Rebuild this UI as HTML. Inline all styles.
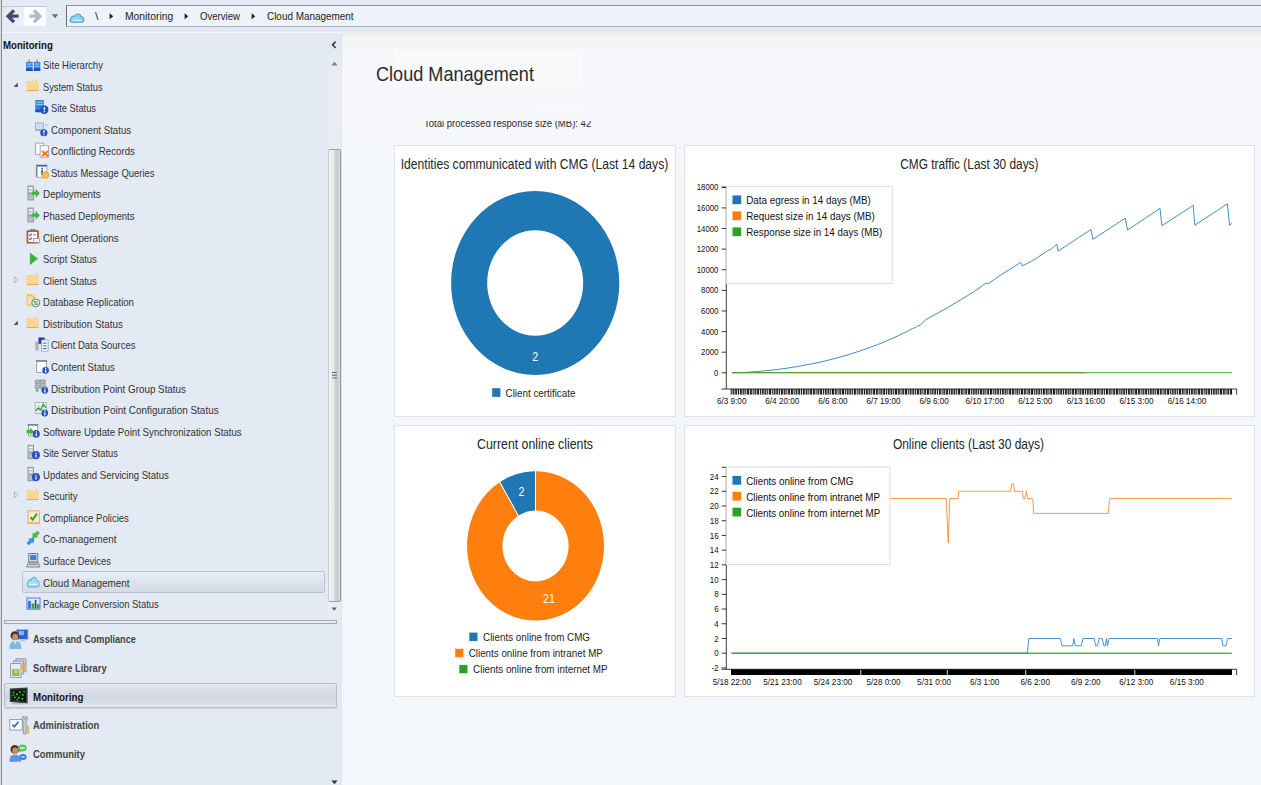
<!DOCTYPE html>
<html lang="en"><head><meta charset="utf-8"><title>Cloud Management</title>
<style>
html,body{margin:0;padding:0;}
body{width:1261px;height:785px;overflow:hidden;position:relative;background:#e3eaf3;font-family:"Liberation Sans",sans-serif;}
.t{position:absolute;white-space:nowrap;line-height:normal;transform-origin:0 0;display:block;}
.abs{position:absolute;}
svg{position:absolute;overflow:visible;}
svg text{font-family:"Liberation Sans",sans-serif;}
#topbar{position:absolute;left:0;top:0;width:1261px;height:32px;background:#e4eaf3;}
#addr{position:absolute;left:66px;top:5px;width:1200px;height:19.5px;background:#eef2f9;border:1px solid #8e96a6;border-top:1.6px solid #8d95a4;border-bottom-color:#a9b2c2;border-left-color:#6a7082;}
#navbtn{position:absolute;left:2px;top:5.6px;width:44px;height:20.4px;border-top:1px solid #c4c8d0;box-sizing:border-box;background:linear-gradient(90deg,#e6e9f0 0,#eceff5 49%,#fbfcfe 50%,#fbfcfe 100%);}
#sidebar{position:absolute;left:2px;top:33px;width:339px;height:752px;background:#e3eaf3;}
#main{position:absolute;left:342px;top:32px;width:919px;height:753px;background:linear-gradient(180deg,#ebebed 0,#f4f5f7 6px,#f6f7fa 30px,#f5f7fb 90px,#f3f6fb 140px,#f3f6fb 100%);}
.card{position:absolute;background:#fff;border:1px solid #dfe3e8;box-sizing:border-box;}
.sel{position:absolute;box-sizing:border-box;border:1px solid #b9c3d2;border-radius:2px;background:linear-gradient(180deg,#e9eef6 0,#dce3ed 50%,#d3dbe6 100%);}
</style></head><body>
<div id="topbar">
<div id="navbtn"></div>
<svg style="left:0;top:0" width="66" height="32" viewBox="0 0 66 32">
<path d="M18.6 16.2 H9.4 M14 10.3 L8.1 16.2 L14 22.1" fill="none" stroke="#4b4672" stroke-width="3.3" stroke-linecap="butt" stroke-linejoin="miter"/>
<path d="M29.4 16.2 H38.6 M34 10.3 L39.9 16.2 L34 22.1" fill="none" stroke="#b3b8c8" stroke-width="3.3" stroke-linecap="butt" stroke-linejoin="miter"/>
<path d="M51.8 14.2 H58.2 L55 18.2 Z" fill="#666a70"/>
</svg>
<div id="addr"></div>
<svg style="left:68px;top:8.8px" width="18" height="16" viewBox="0 0 18 16">
<path d="M4.2 13.2 C1.6 13.2 1 10.4 3 9.4 C3.2 7.2 5.4 6.6 6.6 7.4 C7.6 4.2 12.4 4.2 13 7.8 C16.2 7.6 16.8 12.6 14 13.2 Z" fill="#8fd0f0" stroke="#4aa3dc" stroke-width="1.1"/>
<path d="M4.5 11.3 H13.8" stroke="#e8f6fd" stroke-width="1"/>
</svg>
<span class="t " style="left:95.20px;top:9.94px;font-size:11px;transform:scaleX(1.1125);color:#333;">\</span>
<svg style="left:109.1px;top:13.4px" width="5" height="8" viewBox="0 0 5 8"><path d="M0.6 0.3 L4.2 3.3 L0.6 6.3 Z" fill="#1c1c1c"/></svg>
<svg style="left:184.4px;top:13.4px" width="5" height="8" viewBox="0 0 5 8"><path d="M0.6 0.3 L4.2 3.3 L0.6 6.3 Z" fill="#1c1c1c"/></svg>
<svg style="left:250.6px;top:13.4px" width="5" height="8" viewBox="0 0 5 8"><path d="M0.6 0.3 L4.2 3.3 L0.6 6.3 Z" fill="#1c1c1c"/></svg>
<span class="t " style="left:125.30px;top:10.21px;font-size:10.6px;transform:scaleX(0.9739);color:#1c1c1c;">Monitoring</span>
<span class="t " style="left:200.20px;top:10.21px;font-size:10.6px;transform:scaleX(0.9032);color:#1c1c1c;">Overview</span>
<span class="t " style="left:266.50px;top:10.21px;font-size:10.6px;transform:scaleX(0.9361);color:#1c1c1c;">Cloud Management</span>
</div>
<div class="abs" style="left:0;top:0;width:1px;height:785px;background:#d9dadc"></div>
<div class="abs" style="left:1px;top:0;width:1px;height:785px;background:#8b8e94"></div>
<div class="abs" style="left:2px;top:32px;width:340px;height:1px;background:#f4f7fb"></div>
<div id="sidebar"></div>
<span class="t " style="left:2.60px;top:39.15px;font-size:11px;transform:scaleX(0.8765);color:#111;font-weight:bold;">Monitoring</span>
<svg style="left:330px;top:40px" width="8" height="10" viewBox="0 0 8 10"><path d="M5.6 1.6 L2.6 4.8 L5.6 8" fill="none" stroke="#444" stroke-width="1.7"/></svg>
<div class="sel" style="left:22px;top:571px;width:302.5px;height:21.6px"></div>
<svg style="left:26.00px;top:57.00px" width="16" height="16" viewBox="0 0 16 16"><g transform="translate(-0.096,-0.009) scale(0.9793,1.0455)"><rect x="0.2" y="4.6" width="6.6" height="8.8" fill="#2f86d6"/><rect x="0.2" y="11.0" width="6.6" height="2.4" fill="#1c4fae"/><rect x="1.2" y="6.199999999999999" width="4.6" height="1" fill="#9fd0f5"/><rect x="1.2" y="8.399999999999999" width="4.6" height="1" fill="#9fd0f5"/><rect x="8.1" y="4.6" width="6.6" height="8.8" fill="#2f86d6"/><rect x="8.1" y="11.0" width="6.6" height="2.4" fill="#1c4fae"/><rect x="9.1" y="6.199999999999999" width="4.6" height="1" fill="#9fd0f5"/><rect x="9.1" y="8.399999999999999" width="4.6" height="1" fill="#9fd0f5"/><rect x="2.6" y="2.4" width="1.6" height="2.2" fill="#ff8a1e"/><rect x="10.6" y="2.4" width="1.6" height="2.2" fill="#ff8a1e"/></g></svg>
<span class="t " style="left:42.50px;top:59.12px;font-size:10.7px;transform:scaleX(0.8929);color:#333;">Site Hierarchy</span>
<svg style="left:26.00px;top:78.56px" width="16" height="16" viewBox="0 0 16 16"><g transform="translate(-0.016,-2.600) scale(1.0259,1.0000)"><path d="M0.6 4.6 H5.8 L7.0 3.4 H12.2 V14.6 H0.6 Z" fill="#f7d490"/><rect x="7.199999999999999" y="3.8" width="4.6" height="2.2" fill="#fbf3df"/><rect x="8.6" y="4.3" width="2.4" height="1" fill="#8fb6e6"/><rect x="0.6" y="6.199999999999999" width="11.6" height="8.4" fill="#f8d694"/><rect x="0.6" y="13.6" width="11.6" height="1.1" fill="#e3ae58"/></g></svg>
<span class="t " style="left:42.50px;top:80.68px;font-size:10.7px;transform:scaleX(0.8640);color:#333;">System Status</span>
<svg style="left:13px;top:82.36px" width="6" height="6" viewBox="0 0 6 6"><path d="M4.9 0.5 V5 H0.5 Z" fill="#505050"/></svg>
<svg style="left:34.60px;top:100.12px" width="16" height="16" viewBox="0 0 16 16"><g transform="translate(-0.593,-1.623) scale(0.9924,1.0146)"><rect x="0.9" y="1.6" width="8.6" height="12" fill="#2f86d6"/><rect x="0.9" y="11.2" width="8.6" height="2.4" fill="#1c4fae"/><rect x="1.9" y="3.2" width="6.6" height="1" fill="#9fd0f5"/><rect x="1.9" y="5.4" width="6.6" height="1" fill="#9fd0f5"/><circle cx="10" cy="11.2" r="4.1" fill="#2a50c4"/><rect x="9.4" y="8.6" width="1.3" height="3" fill="#fff"/><rect x="9.4" y="12.5" width="1.3" height="1.2" fill="#fff"/></g></svg>
<span class="t " style="left:50.80px;top:102.24px;font-size:10.7px;transform:scaleX(0.8697);color:#333;">Site Status</span>
<svg style="left:34.60px;top:121.68px" width="16" height="16" viewBox="0 0 16 16"><g transform="translate(-0.810,-0.676) scale(1.0083,0.9853)"><rect x="1.2" y="1.6" width="8" height="7.8" fill="#cbdcf0" stroke="#9aa6b6" stroke-width="0.8"/><rect x="2" y="7.8" width="6.4" height="1.2" fill="#8fb4e0"/><path d="M10 3.6 L13 2.4 V5.4 Z" fill="#c4c9d0"/><circle cx="9.6" cy="11.6" r="3.6" fill="#2a50c4"/><rect x="9.0" y="9.0" width="1.3" height="3" fill="#fff"/><rect x="9.0" y="12.9" width="1.3" height="1.2" fill="#fff"/></g></svg>
<span class="t " style="left:50.80px;top:123.80px;font-size:10.7px;transform:scaleX(0.9049);color:#333;">Component Status</span>
<svg style="left:34.60px;top:143.24px" width="16" height="16" viewBox="0 0 16 16"><g transform="translate(-0.683,-1.126) scale(1.0833,1.0217)"><rect x="1" y="1.2" width="7.4" height="11" fill="#fbfbfb" stroke="#9a9ea6" stroke-width="0.8"/><rect x="5.4" y="3.8" width="7.6" height="11.2" fill="#fbfbfb" stroke="#9a9ea6" stroke-width="0.8"/><path d="M7.2 9 L12.6 14 M12.6 9 L7.2 14" stroke="#ee7a1c" stroke-width="2"/></g></svg>
<span class="t " style="left:50.80px;top:145.36px;font-size:10.7px;transform:scaleX(0.9054);color:#333;">Conflicting Records</span>
<svg style="left:34.60px;top:164.80px" width="16" height="16" viewBox="0 0 16 16"><g transform="translate(-0.085,-0.971) scale(0.9846,0.9710)"><rect x="1.6" y="1" width="10.6" height="12.6" fill="#fdfdfd" stroke="#8f949c" stroke-width="0.8"/><rect x="1.6" y="1" width="10.6" height="1.6" fill="#3c62c8"/><rect x="1" y="3" width="1.6" height="10" fill="#7f858e"/><rect x="6.4" y="6.4" width="1.8" height="5" fill="#2b57c8"/><rect x="6.4" y="3.8" width="1.8" height="1.7" fill="#2b57c8"/><circle cx="10.6" cy="11.4" r="3.4" fill="#ffc15a" stroke="#f39a1e" stroke-width="0.9"/></g></svg>
<span class="t " style="left:50.80px;top:166.92px;font-size:10.7px;transform:scaleX(0.8851);color:#333;">Status Message Queries</span>
<svg style="left:26.00px;top:186.36px" width="16" height="16" viewBox="0 0 16 16"><g transform="translate(0.365,-1.029) scale(0.9597,1.0294)"><rect x="1.6" y="1" width="5.8" height="13.6" fill="#b9bec6" stroke="#7d838c" stroke-width="0.7"/><rect x="2.5" y="2.4" width="4.0" height="1.5" fill="#fff"/><rect x="2.5" y="5.2" width="4.0" height="1.5" fill="#eef0f3"/><rect x="2.5" y="8" width="4.0" height="1.2" fill="#8c929b"/><path d="M6 6.4 H9.6 V3.6 L14 8 L9.6 12.4 V9.6 H6 Z" fill="#3cb83c"/></g></svg>
<span class="t " style="left:42.50px;top:188.48px;font-size:10.7px;transform:scaleX(0.9240);color:#333;">Deployments</span>
<svg style="left:26.00px;top:207.92px" width="16" height="16" viewBox="0 0 16 16"><g transform="translate(0.365,-1.029) scale(0.9597,1.0294)"><rect x="1.6" y="1" width="5.8" height="13.6" fill="#b9bec6" stroke="#7d838c" stroke-width="0.7"/><rect x="2.5" y="2.4" width="4.0" height="1.5" fill="#fff"/><rect x="2.5" y="5.2" width="4.0" height="1.5" fill="#eef0f3"/><rect x="2.5" y="8" width="4.0" height="1.2" fill="#8c929b"/><path d="M6 6.4 H9.6 V3.6 L14 8 L9.6 12.4 V9.6 H6 Z" fill="#3cb83c"/></g></svg>
<span class="t " style="left:42.50px;top:210.04px;font-size:10.7px;transform:scaleX(0.9016);color:#333;">Phased Deployments</span>
<svg style="left:26.00px;top:229.48px" width="16" height="16" viewBox="0 0 16 16"><g transform="translate(-0.246,-0.953) scale(1.0574,1.0584)"><rect x="0.8" y="2" width="11.6" height="12.6" rx="1" fill="#a85a2c"/><rect x="2.4" y="3.8" width="8.4" height="9.4" fill="#fff"/><rect x="4" y="0.9" width="5.2" height="2.4" fill="#7c8088"/><path d="M3.2 6.2 L4.2 7.2 L5.8 5.2 M3.2 10 L4.2 11 L5.8 9" fill="none" stroke="#2c6cd0" stroke-width="1.1"/><rect x="6.8" y="6" width="3.2" height="0.9" fill="#777"/><rect x="7.4" y="10" width="5.6" height="3.6" fill="#eceef1" stroke="#8a8f97" stroke-width="0.7"/></g></svg>
<span class="t " style="left:42.50px;top:231.60px;font-size:10.7px;transform:scaleX(0.9169);color:#333;">Client Operations</span>
<svg style="left:26.00px;top:251.04px" width="16" height="16" viewBox="0 0 16 16"><g transform="translate(0.386,-0.062) scale(0.9762,0.9766)"><path d="M3.6 1.6 L12 8 L3.6 14.4 Z" fill="#3cb83c"/><path d="M6 6.4 L7.6 8 L6 9.6" fill="none" stroke="#2b8a2b" stroke-width="0.9"/></g></svg>
<span class="t " style="left:42.50px;top:253.16px;font-size:10.7px;transform:scaleX(0.8886);color:#333;">Script Status</span>
<svg style="left:26.00px;top:272.60px" width="16" height="16" viewBox="0 0 16 16"><g transform="translate(-0.016,-2.600) scale(1.0259,1.0000)"><path d="M0.6 4.6 H5.8 L7.0 3.4 H12.2 V14.6 H0.6 Z" fill="#f7d490"/><rect x="7.199999999999999" y="3.8" width="4.6" height="2.2" fill="#fbf3df"/><rect x="8.6" y="4.3" width="2.4" height="1" fill="#8fb6e6"/><rect x="0.6" y="6.199999999999999" width="11.6" height="8.4" fill="#f8d694"/><rect x="0.6" y="13.6" width="11.6" height="1.1" fill="#e3ae58"/></g></svg>
<span class="t " style="left:42.50px;top:274.72px;font-size:10.7px;transform:scaleX(0.8885);color:#333;">Client Status</span>
<svg style="left:13.6px;top:275.60px" width="5" height="8" viewBox="0 0 5 8"><path d="M0.7 0.9 L3.9 3.8 L0.7 6.7 Z" fill="#f4f6f9" stroke="#a3a7ad" stroke-width="0.9"/></svg>
<svg style="left:26.00px;top:294.16px" width="16" height="16" viewBox="0 0 16 16"><g transform="translate(-0.194,-1.939) scale(0.9924,0.9697)"><path d="M0.8 2 H6 L7 3.6 H9.2 V14 H0.8 Z" fill="#f5c264"/><rect x="2" y="4.6" width="5" height="8.2" fill="#fbe3ae"/><circle cx="10" cy="11.2" r="4" fill="#f2f6f2" stroke="#5d6a60" stroke-width="0.9"/><path d="M7.8 10.2 H11.6 M12.2 12.4 H8.4" stroke="#2fa52f" stroke-width="1.3"/></g></svg>
<span class="t " style="left:42.50px;top:296.28px;font-size:10.7px;transform:scaleX(0.8947);color:#333;">Database Replication</span>
<svg style="left:26.00px;top:315.72px" width="16" height="16" viewBox="0 0 16 16"><g transform="translate(-0.016,-2.600) scale(1.0259,1.0000)"><path d="M0.6 4.6 H5.8 L7.0 3.4 H12.2 V14.6 H0.6 Z" fill="#f7d490"/><rect x="7.199999999999999" y="3.8" width="4.6" height="2.2" fill="#fbf3df"/><rect x="8.6" y="4.3" width="2.4" height="1" fill="#8fb6e6"/><rect x="0.6" y="6.199999999999999" width="11.6" height="8.4" fill="#f8d694"/><rect x="0.6" y="13.6" width="11.6" height="1.1" fill="#e3ae58"/></g></svg>
<span class="t " style="left:42.50px;top:317.84px;font-size:10.7px;transform:scaleX(0.9202);color:#333;">Distribution Status</span>
<svg style="left:13px;top:319.52px" width="6" height="6" viewBox="0 0 6 6"><path d="M4.9 0.5 V5 H0.5 Z" fill="#505050"/></svg>
<svg style="left:34.60px;top:337.28px" width="16" height="16" viewBox="0 0 16 16"><g transform="translate(-0.414,-0.755) scale(1.0238,1.0462)"><rect x="0.6" y="5" width="3.4" height="8.6" fill="#aeb4bc"/><rect x="3.8" y="1.2" width="6" height="6" fill="#1f3f9e"/><rect x="6.6" y="3.6" width="6.6" height="10.6" fill="#fdfdfd" stroke="#8f949c" stroke-width="0.7"/><rect x="8" y="6" width="3.8" height="1.1" fill="#3a78d8"/><rect x="8" y="8.6" width="3.8" height="1.1" fill="#37a837"/><rect x="8" y="11.2" width="3.8" height="1.1" fill="#3a78d8"/></g></svg>
<span class="t " style="left:50.80px;top:339.40px;font-size:10.7px;transform:scaleX(0.8891);color:#333;">Client Data Sources</span>
<svg style="left:34.60px;top:358.84px" width="16" height="16" viewBox="0 0 16 16"><g transform="translate(0.318,-0.083) scale(0.9701,0.9855)"><rect x="1.4" y="2.2" width="10" height="11.6" fill="#fcfcfd" stroke="#9096a0" stroke-width="0.9"/><rect x="0.6" y="1.2" width="11.6" height="1.6" fill="#7f8690"/><circle cx="10.6" cy="11.6" r="3.4" fill="#2a50c4"/><rect x="10.0" y="10.9" width="1.3" height="3" fill="#fff"/><rect x="10.0" y="9.0" width="1.3" height="1.2" fill="#fff"/></g></svg>
<span class="t " style="left:50.80px;top:360.96px;font-size:10.7px;transform:scaleX(0.9042);color:#333;">Content Status</span>
<svg style="left:34.60px;top:380.40px" width="16" height="16" viewBox="0 0 16 16"><g transform="translate(-0.582,-1.410) scale(0.9773,1.0074)"><rect x="0.8" y="1.4" width="4.6" height="3.6" fill="#b4b9c1" stroke="#7d838c" stroke-width="0.6"/><rect x="6.4" y="1.4" width="4.6" height="3.6" fill="#b4b9c1" stroke="#7d838c" stroke-width="0.6"/><rect x="0.8" y="6.2" width="4.6" height="3.6" fill="#b4b9c1" stroke="#7d838c" stroke-width="0.6"/><rect x="6.4" y="6.2" width="4.6" height="3.6" fill="#b4b9c1" stroke="#7d838c" stroke-width="0.6"/><rect x="1.4" y="10.8" width="2.6" height="2" fill="#3cb83c"/><circle cx="10.6" cy="11.6" r="3.4" fill="#2a50c4"/><rect x="10.0" y="10.9" width="1.3" height="3" fill="#fff"/><rect x="10.0" y="9.0" width="1.3" height="1.2" fill="#fff"/></g></svg>
<span class="t " style="left:50.80px;top:382.52px;font-size:10.7px;transform:scaleX(0.9197);color:#333;">Distribution Point Group Status</span>
<svg style="left:34.60px;top:401.96px" width="16" height="16" viewBox="0 0 16 16"><g transform="translate(-0.582,-1.259) scale(0.9773,1.0368)"><rect x="0.8" y="1.6" width="11.6" height="10.6" fill="#f6f8fa" stroke="#9aa0a8" stroke-width="0.7"/><path d="M0.8 5.2 H12.4 M0.8 8.8 H12.4 M4.6 1.6 V12.2 M8.6 1.6 V12.2" stroke="#b9bec6" stroke-width="0.6"/><path d="M1.4 9.6 L4 7 L6.4 9 L9 3.4 L11.6 6.8" fill="none" stroke="#2fa52f" stroke-width="1.4"/><circle cx="10.6" cy="11.8" r="3.4" fill="#2a50c4"/><rect x="10.0" y="11.100000000000001" width="1.3" height="3" fill="#fff"/><rect x="10.0" y="9.200000000000001" width="1.3" height="1.2" fill="#fff"/></g></svg>
<span class="t " style="left:50.80px;top:404.08px;font-size:10.7px;transform:scaleX(0.9281);color:#333;">Distribution Point Configuration Status</span>
<svg style="left:26.00px;top:423.52px" width="16" height="16" viewBox="0 0 16 16"><g transform="translate(0.231,-1.166) scale(0.9231,0.9716)"><rect x="2.4" y="2.4" width="10" height="11" fill="#fcfcfd" stroke="#9096a0" stroke-width="0.9"/><rect x="1.6" y="1.2" width="11.6" height="1.6" fill="#7f8690"/><path d="M0.4 7 H4.4 V4.8 L8.2 8.8 L4.4 12.8 V10.6 H0.4 Z" fill="#3cb83c"/><circle cx="10.8" cy="11.4" r="3.9" fill="#2a50c4"/><rect x="10.200000000000001" y="10.700000000000001" width="1.3" height="3" fill="#fff"/><rect x="10.200000000000001" y="8.8" width="1.3" height="1.2" fill="#fff"/></g></svg>
<span class="t " style="left:42.50px;top:425.64px;font-size:10.7px;transform:scaleX(0.9062);color:#333;">Software Update Point Synchronization Status</span>
<svg style="left:26.00px;top:445.08px" width="16" height="16" viewBox="0 0 16 16"><g transform="translate(0.065,-0.600) scale(0.9675,1.0000)"><rect x="2" y="0.8" width="5.8" height="13.6" fill="#b9bec6" stroke="#7d838c" stroke-width="0.7"/><rect x="2.9" y="2.2" width="4.0" height="1.5" fill="#fff"/><rect x="2.9" y="5.0" width="4.0" height="1.5" fill="#eef0f3"/><rect x="2.9" y="7.8" width="4.0" height="1.2" fill="#8c929b"/><circle cx="10.2" cy="10.8" r="4.1" fill="#2a50c4"/><rect x="9.6" y="10.100000000000001" width="1.3" height="3" fill="#fff"/><rect x="9.6" y="8.200000000000001" width="1.3" height="1.2" fill="#fff"/></g></svg>
<span class="t " style="left:42.50px;top:447.20px;font-size:10.7px;transform:scaleX(0.8686);color:#333;">Site Server Status</span>
<svg style="left:26.00px;top:466.64px" width="16" height="16" viewBox="0 0 16 16"><g transform="translate(0.065,-0.600) scale(0.9675,1.0000)"><rect x="2" y="0.8" width="5.8" height="13.6" fill="#b9bec6" stroke="#7d838c" stroke-width="0.7"/><rect x="2.9" y="2.2" width="4.0" height="1.5" fill="#fff"/><rect x="2.9" y="5.0" width="4.0" height="1.5" fill="#eef0f3"/><rect x="2.9" y="7.8" width="4.0" height="1.2" fill="#8c929b"/><circle cx="10.2" cy="10.8" r="4.1" fill="#2a50c4"/><rect x="9.6" y="10.100000000000001" width="1.3" height="3" fill="#fff"/><rect x="9.6" y="8.200000000000001" width="1.3" height="1.2" fill="#fff"/></g></svg>
<span class="t " style="left:42.50px;top:468.76px;font-size:10.7px;transform:scaleX(0.8931);color:#333;">Updates and Servicing Status</span>
<svg style="left:26.00px;top:488.20px" width="16" height="16" viewBox="0 0 16 16"><g transform="translate(-0.016,-2.600) scale(1.0259,1.0000)"><path d="M0.6 4.6 H5.8 L7.0 3.4 H12.2 V14.6 H0.6 Z" fill="#f7d490"/><rect x="7.199999999999999" y="3.8" width="4.6" height="2.2" fill="#fbf3df"/><rect x="8.6" y="4.3" width="2.4" height="1" fill="#8fb6e6"/><rect x="0.6" y="6.199999999999999" width="11.6" height="8.4" fill="#f8d694"/><rect x="0.6" y="13.6" width="11.6" height="1.1" fill="#e3ae58"/></g></svg>
<span class="t " style="left:42.50px;top:490.32px;font-size:10.7px;transform:scaleX(0.8952);color:#333;">Security</span>
<svg style="left:13.6px;top:491.20px" width="5" height="8" viewBox="0 0 5 8"><path d="M0.7 0.9 L3.9 3.8 L0.7 6.7 Z" fill="#f4f6f9" stroke="#a3a7ad" stroke-width="0.9"/></svg>
<svg style="left:26.00px;top:509.76px" width="16" height="16" viewBox="0 0 16 16"><g transform="translate(0.414,-0.622) scale(0.9912,1.0156)"><rect x="1.6" y="1.4" width="11.4" height="12.6" fill="#fbecc9" stroke="#e2a95a" stroke-width="0.9"/><rect x="1.6" y="12.6" width="11.4" height="1.6" fill="#e9b566"/><path d="M4.2 7.8 L6.4 10.2 L10.6 4.2" fill="none" stroke="#2fa52f" stroke-width="2"/></g></svg>
<span class="t " style="left:42.50px;top:511.88px;font-size:10.7px;transform:scaleX(0.8926);color:#333;">Compliance Policies</span>
<svg style="left:26.00px;top:531.32px" width="16" height="16" viewBox="0 0 16 16"><g transform="translate(-0.538,-0.300) scale(1.0385,0.9667)"><path d="M1 12.6 L4 9.6 L2.65 8.25 L8.6 7.4 L7.75 13.35 L6.4 12 L3.4 15 Z" fill="#3a8ee0"/><path d="M14 2.4 L11 5.4 L12.35 6.75 L6.4 7.6 L7.25 1.65 L8.6 3 L11.6 0 Z" fill="#46be46"/></g></svg>
<span class="t " style="left:42.50px;top:533.44px;font-size:10.7px;transform:scaleX(0.9235);color:#333;">Co-management</span>
<svg style="left:26.00px;top:552.88px" width="16" height="16" viewBox="0 0 16 16"><g transform="translate(-0.306,-1.270) scale(1.0075,1.1066)"><rect x="3" y="1.6" width="9" height="7.6" fill="#dfe3e8" stroke="#6f757e" stroke-width="0.9"/><rect x="4.4" y="3" width="6.2" height="4.6" fill="#3f7fd6"/><path d="M2.4 10 H12.6 L14.2 13.8 H0.8 Z" fill="#d3d7dd" stroke="#6f757e" stroke-width="0.8"/><rect x="3.4" y="11" width="8.2" height="1" fill="#8c929b"/></g></svg>
<span class="t " style="left:42.50px;top:555.00px;font-size:10.7px;transform:scaleX(0.8716);color:#333;">Surface Devices</span>
<svg style="left:26.00px;top:574.44px" width="16" height="16" viewBox="0 0 16 16"><g transform="translate(0.489,-0.260) scale(0.8889,1.2093)"><path transform="translate(-0.4,-1.6)" d="M3.4 12.4 C0.8 12.4 0.3 9.4 2.4 8.6 C2.5 6.6 4.6 6 5.8 6.8 C6.8 3.8 11.4 3.9 12 7.2 C15 7 15.6 11.8 12.9 12.4 Z" fill="#a9dbf5" stroke="#5fb2e4" stroke-width="1"/><path transform="translate(-0.4,-1.6)" d="M3.6 10.4 H12.6" stroke="#ecf8fe" stroke-width="0.9"/></g></svg>
<span class="t " style="left:42.50px;top:576.56px;font-size:10.7px;transform:scaleX(0.9273);color:#333;">Cloud Management</span>
<svg style="left:26.00px;top:596.00px" width="16" height="16" viewBox="0 0 16 16"><g transform="translate(0.200,0.069) scale(1.0000,0.9655)"><rect x="0.8" y="2" width="13" height="11.6" fill="#dfe9f8" stroke="#4f7ccc" stroke-width="1"/><rect x="2" y="5" width="2.6" height="8" fill="#2b6fd0"/><rect x="5.4" y="7.6" width="2.6" height="5.4" fill="#2fa52f"/><rect x="8.6" y="4" width="1.6" height="9" fill="#2b3f8a"/><rect x="10.8" y="8.4" width="2.4" height="4.6" fill="#2fa52f"/></g></svg>
<span class="t " style="left:42.50px;top:598.12px;font-size:10.7px;transform:scaleX(0.8770);color:#333;">Package Conversion Status</span>
<div class="abs" style="left:328px;top:57px;width:13px;height:561px;background:#e9ecf1"></div>
<div class="abs" style="left:328.4px;top:148.6px;width:12.4px;height:453px;box-sizing:border-box;border:1px solid #9da2ab;border-left-color:#c9ccd2;border-right-color:#8d929b;border-radius:2px;background:linear-gradient(90deg,#f0f1f3 0,#e7e8eb 45%,#cdcfd3 56%,#c9cbcf 82%,#e4e5e8 100%)"></div>
<div class="abs" style="left:332px;top:371.8px;width:5px;height:1.6px;background:linear-gradient(90deg,#4c4f55,#8a8d93);box-shadow:0 2.7px 0 #5e6167,0 5.4px 0 #6a6d73"></div>
<svg style="left:331px;top:61px" width="7" height="5" viewBox="0 0 7 5"><path d="M0.4 4.4 L3.5 0.8 L6.6 4.4 Z" fill="#7d828b"/></svg>
<svg style="left:331.4px;top:607.4px" width="7" height="5" viewBox="0 0 7 5"><path d="M0.6 0.5 L3.2 3.8 L5.8 0.5 Z" fill="#5d6168"/></svg>
<div class="abs" style="left:4px;top:619.8px;width:333px;height:4px;box-sizing:border-box;border:1px solid #a3a9b3;background:#e7eaef"></div>
<div class="sel" style="left:4px;top:683.3px;width:333px;height:24.8px;border-color:#b9c0cd;box-shadow:0 1px 1px rgba(120,130,150,.25);background:linear-gradient(180deg,#e4e8ef 0,#d5dae3 40%,#d3d8e1 60%,#e2e6ed 100%)"></div>
<svg style="left:9px;top:628.50px" width="20" height="21" viewBox="0 0 20 21"><rect x="7.4" y="0.4" width="11.6" height="10" fill="#2a63c8" stroke="#a9bbdc" stroke-width="0.9"/><rect x="9.6" y="1.8" width="5.4" height="4.4" fill="#7fb4ee"/><rect x="11" y="10.4" width="5" height="2" fill="#c0c5cd"/><rect x="9.4" y="12.2" width="8.4" height="1.2" fill="#d4d8de"/><circle cx="5.8" cy="6.6" r="4.3" fill="#4a3020"/><ellipse cx="6.2" cy="8" rx="2.9" ry="3.2" fill="#c98f62"/><path d="M0.4 20 C0.4 13.6 2.8 12 6.2 12 C9.6 12 12.4 13.6 12.4 20 Z" fill="#7db9e6"/><path d="M4.6 12.2 L6.2 15 L7.8 12.2 Z" fill="#f4f7fb"/></svg>
<span class="t " style="left:33.30px;top:632.64px;font-size:11px;transform:scaleX(0.8284);color:#444;font-weight:bold;">Assets and Compliance</span>
<svg style="left:9px;top:657.50px" width="20" height="21" viewBox="0 0 20 21"><rect x="7" y="0.8" width="10" height="13" fill="#c9d3e4" stroke="#7f8ca6" stroke-width="0.8"/><rect x="4.4" y="3" width="10" height="13" fill="#d5dded" stroke="#7f8ca6" stroke-width="0.8"/><rect x="1.6" y="5.6" width="10.4" height="14" fill="#e6ebf5" stroke="#7f8ca6" stroke-width="0.8"/><rect x="3" y="11" width="7.4" height="7" fill="#7fc06a"/><circle cx="6.8" cy="13.6" r="2" fill="#f2c14e"/><rect x="13" y="5" width="3" height="7" fill="#f0a64a"/></svg>
<span class="t " style="left:33.30px;top:661.64px;font-size:11px;transform:scaleX(0.8479);color:#444;font-weight:bold;">Software Library</span>
<svg style="left:9px;top:686.50px" width="20" height="21" viewBox="0 0 20 21"><path d="M0.8 1.6 L18.6 0.6 V16.4 L0.8 15 Z" fill="#3a3d42"/><path d="M2.4 3 L17 2.2 V14.8 L2.4 13.6 Z" fill="#0c1a0e"/><g fill="#35d335"><rect x="4" y="4.6" width="1.6" height="1.6"/><rect x="7" y="6.4" width="1.6" height="1.6"/><rect x="10" y="4.2" width="1.6" height="1.6"/><rect x="13" y="7" width="1.6" height="1.6"/><rect x="5" y="9.6" width="1.6" height="1.6"/><rect x="9" y="10" width="1.6" height="1.6"/><rect x="12.6" y="11" width="1.6" height="1.6"/><rect x="14.4" y="4" width="1.4" height="1.4"/><rect x="3.4" y="7.4" width="1.4" height="1.4"/><rect x="7.6" y="12" width="1.4" height="1.4"/></g><rect x="3" y="16" width="14" height="1.4" fill="#b9bec6"/></svg>
<span class="t " style="left:33.30px;top:690.64px;font-size:11px;transform:scaleX(0.8871);color:#161616;font-weight:bold;">Monitoring</span>
<svg style="left:9px;top:715.00px" width="20" height="21" viewBox="0 0 20 21"><rect x="0.8" y="4.6" width="12.4" height="10.4" fill="#fbfcfd" stroke="#8e949d" stroke-width="0.9"/><path d="M3.4 9.6 L5.4 11.8 L9.4 6.8" fill="none" stroke="#2b6fd0" stroke-width="1.7"/><path d="M14.2 19 V6.2 C12.4 5 12.6 1.8 15 1 V3.8 H17 V1 C19 2 19 5 17.2 6.2 V19 Z" fill="#c7ccd3" stroke="#7f858e" stroke-width="0.7"/><rect x="18.4" y="10.6" width="1.4" height="8" fill="#f09a28"/></svg>
<span class="t " style="left:33.30px;top:719.14px;font-size:11px;transform:scaleX(0.8542);color:#444;font-weight:bold;">Administration</span>
<svg style="left:9px;top:744.00px" width="20" height="21" viewBox="0 0 20 21"><circle cx="5.8" cy="5.4" r="4.3" fill="#4a3020"/><ellipse cx="6.2" cy="6.8" rx="2.9" ry="3.2" fill="#c98f62"/><path d="M0.4 17.8 C0.4 12.2 2.8 10.8 6.2 10.8 C9.6 10.8 12.2 12.2 12.2 17.8 Z" fill="#5b96dc"/><ellipse cx="13.4" cy="4" rx="4.4" ry="3.4" fill="#5cc85c"/><path d="M10.6 6.2 L10 8.6 L12.6 7 Z" fill="#5cc85c"/><rect x="11" y="3.4" width="4.8" height="1.2" fill="#fff"/><ellipse cx="14" cy="13" rx="3.6" ry="3" fill="#3a78d8"/><rect x="12.2" y="12.4" width="3.6" height="1.1" fill="#fff"/></svg>
<span class="t " style="left:33.30px;top:748.14px;font-size:11px;transform:scaleX(0.8595);color:#444;font-weight:bold;">Community</span>
<svg style="left:331px;top:780px" width="7" height="5" viewBox="0 0 7 5"><path d="M0.4 0.6 L3.5 4.2 L6.6 0.6 Z" fill="#333"/></svg>
<div id="main"></div>
<div class="abs" style="left:341px;top:33px;width:1px;height:752px;background:#dfe6f0"></div>
<div class="abs" style="left:392.5px;top:50px;width:188.5px;height:36px;background:#f8f9fb"></div>
<span class="t " style="left:376.20px;top:62.64px;font-size:20.4px;transform:scaleX(0.8874);color:#2b2b2b;">Cloud Management</span>
<div class="abs" style="left:529px;top:109px;width:62px;height:1px;background:#fafbfd"></div>
<div class="abs" style="left:420px;top:120.6px;width:180px;height:12px;overflow:hidden"><span class="t " style="left:4.10px;top:-3.55px;font-size:11px;transform:scaleX(0.8654);color:#2a2a2a;">Total processed response size (MB): 42</span></div>
<div class="card" style="left:394px;top:145px;width:282px;height:271.5px"></div>
<div class="card" style="left:684px;top:145px;width:570.5px;height:271.5px"></div>
<div class="card" style="left:394px;top:425px;width:282px;height:271.5px"></div>
<div class="card" style="left:684px;top:425px;width:570.5px;height:271.5px"></div>
<svg style="left:0;top:0" width="1261" height="785" viewBox="0 0 1261 785">
<text x="400.70" y="169.30" font-size="14" text-anchor="start" fill="#262626" textLength="267.60" lengthAdjust="spacingAndGlyphs">Identities communicated with CMG (Last 14 days)</text>
<text x="900.30" y="168.80" font-size="14" text-anchor="start" fill="#262626" textLength="138.20" lengthAdjust="spacingAndGlyphs">CMG traffic (Last 30 days)</text>
<text x="477.00" y="449.30" font-size="14" text-anchor="start" fill="#262626" textLength="116.00" lengthAdjust="spacingAndGlyphs">Current online clients</text>
<text x="892.90" y="448.80" font-size="14" text-anchor="start" fill="#262626" textLength="151.10" lengthAdjust="spacingAndGlyphs">Online clients (Last 30 days)</text>
<ellipse cx="535.2" cy="283.0" rx="66.05" ry="72.30000000000001" fill="none" stroke="#1f77b4" stroke-width="1"/>
<path fill-rule="evenodd" fill="#1f77b4" d="M451.1 283.0 a84.1 91.9 0 1 0 168.2 0 a84.1 91.9 0 1 0 -168.2 0 Z M487.20000000000005 283.0 a48.0 52.7 0 1 0 96.0 0 a48.0 52.7 0 1 0 -96.0 0 Z"/>
<text x="535.20" y="360.90" font-size="12" text-anchor="middle" fill="#fff" textLength="6.00" lengthAdjust="spacingAndGlyphs">2</text>
<rect x="492.2" y="388.2" width="8.2" height="8.7" fill="#1f77b4"/>
<text x="505.60" y="396.60" font-size="11" text-anchor="start" fill="#1e1e1e" textLength="69.80" lengthAdjust="spacingAndGlyphs">Client certificate</text>
<path d="M535.50 470.70 A69.0 75.2 0 1 1 499.65 481.65 L518.56 516.00 A32.6 35.0 0 1 0 535.50 510.90 Z" fill="#ff7f0e" stroke="#fff" stroke-width="1"/>
<path d="M499.65 481.65 A69.0 75.2 0 0 1 535.50 470.70 L535.50 510.90 A32.6 35.0 0 0 0 518.56 516.00 Z" fill="#1f77b4" stroke="#fff" stroke-width="1"/>
<text x="521.50" y="495.80" font-size="12" text-anchor="middle" fill="#fff" textLength="6.00" lengthAdjust="spacingAndGlyphs">2</text>
<text x="549.00" y="603.40" font-size="12" text-anchor="middle" fill="#fff" textLength="11.80" lengthAdjust="spacingAndGlyphs">21</text>
<rect x="469.3" y="632.6" width="8.2" height="8.4" fill="#1f77b4"/>
<text x="483.10" y="640.80" font-size="11" text-anchor="start" fill="#1e1e1e" textLength="106.90" lengthAdjust="spacingAndGlyphs">Clients online from CMG</text>
<rect x="455.2" y="648.8" width="8.2" height="8.4" fill="#ff7f0e"/>
<text x="468.70" y="657.00" font-size="11" text-anchor="start" fill="#1e1e1e" textLength="134.20" lengthAdjust="spacingAndGlyphs">Clients online from intranet MP</text>
<rect x="459.3" y="664.9" width="8.2" height="8.4" fill="#2ca02c"/>
<text x="473.10" y="673.10" font-size="11" text-anchor="start" fill="#1e1e1e" textLength="134.50" lengthAdjust="spacingAndGlyphs">Clients online from internet MP</text>
<path d="M726.3 187.2 V389.0" stroke="#3a3a3a" stroke-width="1" fill="none"/>
<path d="M721.6 372.80 H726.3" stroke="#3a3a3a" stroke-width="1"/>
<text x="718.40" y="375.90" font-size="9" text-anchor="end" fill="#111" textLength="4.33" lengthAdjust="spacingAndGlyphs">0</text>
<path d="M721.6 352.19 H726.3" stroke="#3a3a3a" stroke-width="1"/>
<text x="718.40" y="355.29" font-size="9" text-anchor="end" fill="#111" textLength="17.32" lengthAdjust="spacingAndGlyphs">2000</text>
<path d="M721.6 331.58 H726.3" stroke="#3a3a3a" stroke-width="1"/>
<text x="718.40" y="334.68" font-size="9" text-anchor="end" fill="#111" textLength="17.32" lengthAdjust="spacingAndGlyphs">4000</text>
<path d="M721.6 310.97 H726.3" stroke="#3a3a3a" stroke-width="1"/>
<text x="718.40" y="314.07" font-size="9" text-anchor="end" fill="#111" textLength="17.32" lengthAdjust="spacingAndGlyphs">6000</text>
<path d="M721.6 290.36 H726.3" stroke="#3a3a3a" stroke-width="1"/>
<text x="718.40" y="293.46" font-size="9" text-anchor="end" fill="#111" textLength="17.32" lengthAdjust="spacingAndGlyphs">8000</text>
<path d="M721.6 269.74 H726.3" stroke="#3a3a3a" stroke-width="1"/>
<text x="718.40" y="272.84" font-size="9" text-anchor="end" fill="#111" textLength="21.65" lengthAdjust="spacingAndGlyphs">10000</text>
<path d="M721.6 249.13 H726.3" stroke="#3a3a3a" stroke-width="1"/>
<text x="718.40" y="252.23" font-size="9" text-anchor="end" fill="#111" textLength="21.65" lengthAdjust="spacingAndGlyphs">12000</text>
<path d="M721.6 228.52 H726.3" stroke="#3a3a3a" stroke-width="1"/>
<text x="718.40" y="231.62" font-size="9" text-anchor="end" fill="#111" textLength="21.65" lengthAdjust="spacingAndGlyphs">14000</text>
<path d="M721.6 207.91 H726.3" stroke="#3a3a3a" stroke-width="1"/>
<text x="718.40" y="211.01" font-size="9" text-anchor="end" fill="#111" textLength="21.65" lengthAdjust="spacingAndGlyphs">16000</text>
<path d="M721.6 187.30 H726.3" stroke="#3a3a3a" stroke-width="1.6"/>
<text x="718.40" y="190.40" font-size="9" text-anchor="end" fill="#111" textLength="21.65" lengthAdjust="spacingAndGlyphs">18000</text>
<path d="M721.4 389.0 H1237 M1236.6 389.0 V394.6" stroke="#3a3a3a" stroke-width="1" fill="none"/>
<path d="M731.20 389.0V394.6M733.03 389.0V394.6M733.94 389.0V394.6M735.77 389.0V394.6M736.68 389.0V394.6M738.50 389.0V394.6M740.33 389.0V394.6M741.24 389.0V394.6M743.07 389.0V394.6M743.98 389.0V394.6M745.81 389.0V394.6M747.63 389.0V394.6M748.55 389.0V394.6M750.37 389.0V394.6M751.29 389.0V394.6M753.11 389.0V394.6M754.94 389.0V394.6M755.85 389.0V394.6M757.68 389.0V394.6M758.59 389.0V394.6M760.42 389.0V394.6M762.24 389.0V394.6M763.16 389.0V394.6M764.98 389.0V394.6M765.89 389.0V394.6M767.72 389.0V394.6M769.55 389.0V394.6M770.46 389.0V394.6M772.29 389.0V394.6M774.11 389.0V394.6M775.02 389.0V394.6M776.85 389.0V394.6M777.76 389.0V394.6M779.59 389.0V394.6M781.42 389.0V394.6M782.33 389.0V394.6M784.15 389.0V394.6M785.07 389.0V394.6M786.89 389.0V394.6M788.72 389.0V394.6M789.63 389.0V394.6M791.46 389.0V394.6M792.37 389.0V394.6M794.20 389.0V394.6M796.02 389.0V394.6M796.94 389.0V394.6M798.76 389.0V394.6M799.68 389.0V394.6M801.50 389.0V394.6M803.33 389.0V394.6M804.24 389.0V394.6M806.07 389.0V394.6M806.98 389.0V394.6M808.81 389.0V394.6M810.63 389.0V394.6M811.54 389.0V394.6M813.37 389.0V394.6M814.28 389.0V394.6M816.11 389.0V394.6M817.94 389.0V394.6M818.85 389.0V394.6M820.67 389.0V394.6M821.59 389.0V394.6M823.41 389.0V394.6M825.24 389.0V394.6M826.15 389.0V394.6M827.98 389.0V394.6M828.89 389.0V394.6M830.72 389.0V394.6M832.54 389.0V394.6M833.46 389.0V394.6M835.28 389.0V394.6M836.20 389.0V394.6M838.02 389.0V394.6M839.85 389.0V394.6M840.76 389.0V394.6M842.59 389.0V394.6M843.50 389.0V394.6M845.33 389.0V394.6M847.15 389.0V394.6M848.06 389.0V394.6M849.89 389.0V394.6M850.80 389.0V394.6M852.63 389.0V394.6M854.46 389.0V394.6M855.37 389.0V394.6M857.19 389.0V394.6M859.02 389.0V394.6M859.93 389.0V394.6M861.76 389.0V394.6M862.67 389.0V394.6M864.50 389.0V394.6M866.32 389.0V394.6M867.24 389.0V394.6M869.06 389.0V394.6M869.98 389.0V394.6M871.80 389.0V394.6M873.63 389.0V394.6M874.54 389.0V394.6M876.37 389.0V394.6M877.28 389.0V394.6M879.11 389.0V394.6M880.93 389.0V394.6M881.85 389.0V394.6M883.67 389.0V394.6M884.58 389.0V394.6M886.41 389.0V394.6M888.24 389.0V394.6M889.15 389.0V394.6M890.98 389.0V394.6M891.89 389.0V394.6M893.71 389.0V394.6M895.54 389.0V394.6M896.45 389.0V394.6M898.28 389.0V394.6M899.19 389.0V394.6M901.02 389.0V394.6M902.84 389.0V394.6M903.76 389.0V394.6M905.58 389.0V394.6M906.50 389.0V394.6M908.32 389.0V394.6M910.15 389.0V394.6M911.06 389.0V394.6M912.89 389.0V394.6M913.80 389.0V394.6M915.63 389.0V394.6M917.45 389.0V394.6M918.37 389.0V394.6M920.19 389.0V394.6M921.10 389.0V394.6M922.93 389.0V394.6M924.76 389.0V394.6M925.67 389.0V394.6M927.50 389.0V394.6M928.41 389.0V394.6M930.23 389.0V394.6M932.06 389.0V394.6M932.97 389.0V394.6M934.80 389.0V394.6M935.71 389.0V394.6M937.54 389.0V394.6M939.36 389.0V394.6M940.28 389.0V394.6M942.10 389.0V394.6M943.93 389.0V394.6M944.84 389.0V394.6M946.67 389.0V394.6M947.58 389.0V394.6M949.41 389.0V394.6M951.23 389.0V394.6M952.15 389.0V394.6M953.97 389.0V394.6M954.88 389.0V394.6M956.71 389.0V394.6M958.54 389.0V394.6M959.45 389.0V394.6M961.28 389.0V394.6M962.19 389.0V394.6M964.02 389.0V394.6M965.84 389.0V394.6M966.75 389.0V394.6M968.58 389.0V394.6M969.49 389.0V394.6M971.32 389.0V394.6M973.15 389.0V394.6M974.06 389.0V394.6M975.88 389.0V394.6M976.80 389.0V394.6M978.62 389.0V394.6M980.45 389.0V394.6M981.36 389.0V394.6M983.19 389.0V394.6M984.10 389.0V394.6M985.93 389.0V394.6M987.75 389.0V394.6M988.67 389.0V394.6M990.49 389.0V394.6M991.40 389.0V394.6M993.23 389.0V394.6M995.06 389.0V394.6M995.97 389.0V394.6M997.80 389.0V394.6M998.71 389.0V394.6M1000.54 389.0V394.6M1002.36 389.0V394.6M1003.27 389.0V394.6M1005.10 389.0V394.6M1006.01 389.0V394.6M1007.84 389.0V394.6M1009.67 389.0V394.6M1010.58 389.0V394.6M1012.40 389.0V394.6M1013.32 389.0V394.6M1015.14 389.0V394.6M1016.97 389.0V394.6M1017.88 389.0V394.6M1019.71 389.0V394.6M1021.53 389.0V394.6M1022.45 389.0V394.6M1024.27 389.0V394.6M1025.19 389.0V394.6M1027.01 389.0V394.6M1028.84 389.0V394.6M1029.75 389.0V394.6M1031.58 389.0V394.6M1032.49 389.0V394.6M1034.32 389.0V394.6M1036.14 389.0V394.6M1037.06 389.0V394.6M1038.88 389.0V394.6M1039.79 389.0V394.6M1041.62 389.0V394.6M1043.45 389.0V394.6M1044.36 389.0V394.6M1046.18 389.0V394.6M1047.10 389.0V394.6M1048.92 389.0V394.6M1050.75 389.0V394.6M1051.66 389.0V394.6M1053.49 389.0V394.6M1054.40 389.0V394.6M1056.23 389.0V394.6M1058.05 389.0V394.6M1058.97 389.0V394.6M1060.79 389.0V394.6M1061.71 389.0V394.6M1063.53 389.0V394.6M1065.36 389.0V394.6M1066.27 389.0V394.6M1068.10 389.0V394.6M1069.01 389.0V394.6M1070.84 389.0V394.6M1072.66 389.0V394.6M1073.58 389.0V394.6M1075.40 389.0V394.6M1076.31 389.0V394.6M1078.14 389.0V394.6M1079.97 389.0V394.6M1080.88 389.0V394.6M1082.70 389.0V394.6M1083.62 389.0V394.6M1085.44 389.0V394.6M1087.27 389.0V394.6M1088.18 389.0V394.6M1090.01 389.0V394.6M1090.92 389.0V394.6M1092.75 389.0V394.6M1094.57 389.0V394.6M1095.49 389.0V394.6M1097.31 389.0V394.6M1098.23 389.0V394.6M1100.05 389.0V394.6M1101.88 389.0V394.6M1102.79 389.0V394.6M1104.62 389.0V394.6M1106.44 389.0V394.6M1107.36 389.0V394.6M1109.18 389.0V394.6M1110.10 389.0V394.6M1111.92 389.0V394.6M1113.75 389.0V394.6M1114.66 389.0V394.6M1116.49 389.0V394.6M1117.40 389.0V394.6M1119.23 389.0V394.6M1121.05 389.0V394.6M1121.96 389.0V394.6M1123.79 389.0V394.6M1124.70 389.0V394.6M1126.53 389.0V394.6M1128.36 389.0V394.6M1129.27 389.0V394.6M1131.09 389.0V394.6M1132.01 389.0V394.6M1133.83 389.0V394.6M1135.66 389.0V394.6M1136.57 389.0V394.6M1138.40 389.0V394.6M1139.31 389.0V394.6M1141.14 389.0V394.6M1142.96 389.0V394.6M1143.88 389.0V394.6M1145.70 389.0V394.6M1146.62 389.0V394.6M1148.44 389.0V394.6M1150.27 389.0V394.6M1151.18 389.0V394.6M1153.01 389.0V394.6M1153.92 389.0V394.6M1155.75 389.0V394.6M1157.57 389.0V394.6M1158.48 389.0V394.6M1160.31 389.0V394.6M1161.22 389.0V394.6M1163.05 389.0V394.6M1164.88 389.0V394.6M1165.79 389.0V394.6M1167.61 389.0V394.6M1168.53 389.0V394.6M1170.35 389.0V394.6M1172.18 389.0V394.6M1173.09 389.0V394.6M1174.92 389.0V394.6M1175.83 389.0V394.6M1177.66 389.0V394.6M1179.48 389.0V394.6M1180.40 389.0V394.6M1182.22 389.0V394.6M1183.13 389.0V394.6M1184.96 389.0V394.6M1186.79 389.0V394.6M1187.70 389.0V394.6M1189.53 389.0V394.6M1191.35 389.0V394.6M1192.27 389.0V394.6M1194.09 389.0V394.6M1195.00 389.0V394.6M1196.83 389.0V394.6M1198.66 389.0V394.6M1199.57 389.0V394.6M1201.39 389.0V394.6M1202.31 389.0V394.6M1204.13 389.0V394.6M1205.96 389.0V394.6M1206.87 389.0V394.6M1208.70 389.0V394.6M1209.61 389.0V394.6M1211.44 389.0V394.6M1213.26 389.0V394.6M1214.18 389.0V394.6M1216.00 389.0V394.6M1216.92 389.0V394.6M1218.74 389.0V394.6M1220.57 389.0V394.6M1221.48 389.0V394.6M1223.31 389.0V394.6M1224.22 389.0V394.6M1226.05 389.0V394.6M1227.87 389.0V394.6M1228.79 389.0V394.6M1230.61 389.0V394.6M1231.52 389.0V394.6" stroke="#000" stroke-width="0.92" fill="none"/>
<text x="731.70" y="404.20" font-size="9" text-anchor="middle" fill="#111" textLength="29.44" lengthAdjust="spacingAndGlyphs">6/3 9:00</text>
<text x="782.30" y="404.20" font-size="9" text-anchor="middle" fill="#111" textLength="33.97" lengthAdjust="spacingAndGlyphs">6/4 20:00</text>
<text x="832.90" y="404.20" font-size="9" text-anchor="middle" fill="#111" textLength="29.44" lengthAdjust="spacingAndGlyphs">6/6 8:00</text>
<text x="883.50" y="404.20" font-size="9" text-anchor="middle" fill="#111" textLength="33.97" lengthAdjust="spacingAndGlyphs">6/7 19:00</text>
<text x="934.10" y="404.20" font-size="9" text-anchor="middle" fill="#111" textLength="29.44" lengthAdjust="spacingAndGlyphs">6/9 6:00</text>
<text x="984.70" y="404.20" font-size="9" text-anchor="middle" fill="#111" textLength="38.50" lengthAdjust="spacingAndGlyphs">6/10 17:00</text>
<text x="1035.30" y="404.20" font-size="9" text-anchor="middle" fill="#111" textLength="33.97" lengthAdjust="spacingAndGlyphs">6/12 5:00</text>
<text x="1085.90" y="404.20" font-size="9" text-anchor="middle" fill="#111" textLength="38.50" lengthAdjust="spacingAndGlyphs">6/13 16:00</text>
<text x="1136.50" y="404.20" font-size="9" text-anchor="middle" fill="#111" textLength="33.97" lengthAdjust="spacingAndGlyphs">6/15 3:00</text>
<text x="1187.10" y="404.20" font-size="9" text-anchor="middle" fill="#111" textLength="38.50" lengthAdjust="spacingAndGlyphs">6/16 14:00</text>
<path d="M732.0 372.6 L742.0 372.6 L747.0 372.3 L752.0 371.9 L757.0 371.6 L762.0 371.1 L767.0 370.6 L772.0 370.1 L777.0 369.5 L782.0 368.9 L787.0 368.2 L792.0 367.4 L797.0 366.6 L802.0 365.7 L807.0 364.8 L812.0 363.8 L817.0 362.8 L822.0 361.7 L827.0 360.5 L832.0 359.2 L837.0 357.9 L842.0 356.5 L847.0 355.1 L852.0 353.5 L857.0 351.9 L862.0 350.3 L867.0 348.5 L872.0 346.7 L877.0 344.8 L882.0 342.8 L887.0 340.7 L892.0 338.5 L897.0 336.3 L902.0 333.9 L907.0 331.5 L912.6 328.4 L915.5 327.6 L917.9 325.8 L920.0 325.2 L925.9 319.6 L947.3 307.8 L968.7 295.0 L980.0 287.5 L985.9 283.0 L988.0 283.8 L1000.0 275.5 L1020.7 262.4 L1022.3 265.9 L1033.5 260.2 L1048.2 250.3 L1050.0 250.1 L1056.8 244.2 L1058.1 251.1 L1091.0 229.5 L1092.9 239.4 L1125.2 218.2 L1127.6 230.0 L1160.0 208.4 L1161.9 225.7 L1193.2 205.4 L1194.8 225.2 L1227.4 203.8 L1229.5 225.2 L1231.9 223.3" fill="none" stroke="#2c80c0" stroke-width="0.9" stroke-linejoin="round"/>
<path d="M732 372.7 H1086" stroke="#ff7f0e" stroke-width="1.1" fill="none"/>
<path d="M732 372.6 H1231.9" stroke="#2ca02c" stroke-width="1.1" fill="none" opacity="0.75"/>
<rect x="726.6" y="186.6" width="165.6" height="97" fill="#fff" fill-opacity="0.88" stroke="#dcdcdc" stroke-width="1"/>
<rect x="732.5" y="195.4" width="8.7" height="8.8" fill="#1f77b4"/>
<text x="746.20" y="204.20" font-size="11" text-anchor="start" fill="#111" textLength="124.60" lengthAdjust="spacingAndGlyphs">Data egress in 14 days (MB)</text>
<rect x="732.5" y="211.4" width="8.7" height="8.8" fill="#ff7f0e"/>
<text x="746.20" y="220.20" font-size="11" text-anchor="start" fill="#111" textLength="128.60" lengthAdjust="spacingAndGlyphs">Request size in 14 days (MB)</text>
<rect x="732.5" y="227.4" width="8.7" height="8.8" fill="#2ca02c"/>
<text x="746.20" y="236.20" font-size="11" text-anchor="start" fill="#111" textLength="136.20" lengthAdjust="spacingAndGlyphs">Response size in 14 days (MB)</text>
<path d="M721.6 467.3 H726.3 V669.3" stroke="#3a3a3a" stroke-width="1" fill="none"/>
<path d="M721.6 667.92 H726.3" stroke="#3a3a3a" stroke-width="1"/>
<text x="718.60" y="671.02" font-size="9" text-anchor="end" fill="#111" textLength="7.20" lengthAdjust="spacingAndGlyphs">-2</text>
<path d="M721.6 653.20 H726.3" stroke="#3a3a3a" stroke-width="1"/>
<text x="718.60" y="656.30" font-size="9" text-anchor="end" fill="#111" textLength="4.40" lengthAdjust="spacingAndGlyphs">0</text>
<path d="M721.6 638.48 H726.3" stroke="#3a3a3a" stroke-width="1"/>
<text x="718.60" y="641.58" font-size="9" text-anchor="end" fill="#111" textLength="4.40" lengthAdjust="spacingAndGlyphs">2</text>
<path d="M721.6 623.76 H726.3" stroke="#3a3a3a" stroke-width="1"/>
<text x="718.60" y="626.86" font-size="9" text-anchor="end" fill="#111" textLength="4.40" lengthAdjust="spacingAndGlyphs">4</text>
<path d="M721.6 609.04 H726.3" stroke="#3a3a3a" stroke-width="1"/>
<text x="718.60" y="612.14" font-size="9" text-anchor="end" fill="#111" textLength="4.40" lengthAdjust="spacingAndGlyphs">6</text>
<path d="M721.6 594.32 H726.3" stroke="#3a3a3a" stroke-width="1"/>
<text x="718.60" y="597.42" font-size="9" text-anchor="end" fill="#111" textLength="4.40" lengthAdjust="spacingAndGlyphs">8</text>
<path d="M721.6 579.60 H726.3" stroke="#3a3a3a" stroke-width="1"/>
<text x="718.60" y="582.70" font-size="9" text-anchor="end" fill="#111" textLength="8.80" lengthAdjust="spacingAndGlyphs">10</text>
<path d="M721.6 564.88 H726.3" stroke="#3a3a3a" stroke-width="1"/>
<text x="718.60" y="567.98" font-size="9" text-anchor="end" fill="#111" textLength="8.80" lengthAdjust="spacingAndGlyphs">12</text>
<path d="M721.6 550.16 H726.3" stroke="#3a3a3a" stroke-width="1"/>
<text x="718.60" y="553.26" font-size="9" text-anchor="end" fill="#111" textLength="8.80" lengthAdjust="spacingAndGlyphs">14</text>
<path d="M721.6 535.44 H726.3" stroke="#3a3a3a" stroke-width="1"/>
<text x="718.60" y="538.54" font-size="9" text-anchor="end" fill="#111" textLength="8.80" lengthAdjust="spacingAndGlyphs">16</text>
<path d="M721.6 520.72 H726.3" stroke="#3a3a3a" stroke-width="1"/>
<text x="718.60" y="523.82" font-size="9" text-anchor="end" fill="#111" textLength="8.80" lengthAdjust="spacingAndGlyphs">18</text>
<path d="M721.6 506.00 H726.3" stroke="#3a3a3a" stroke-width="1"/>
<text x="718.60" y="509.10" font-size="9" text-anchor="end" fill="#111" textLength="8.80" lengthAdjust="spacingAndGlyphs">20</text>
<path d="M721.6 491.28 H726.3" stroke="#3a3a3a" stroke-width="1"/>
<text x="718.60" y="494.38" font-size="9" text-anchor="end" fill="#111" textLength="8.80" lengthAdjust="spacingAndGlyphs">22</text>
<path d="M721.6 476.56 H726.3" stroke="#3a3a3a" stroke-width="1"/>
<text x="718.60" y="479.66" font-size="9" text-anchor="end" fill="#111" textLength="8.80" lengthAdjust="spacingAndGlyphs">24</text>
<path d="M721.4 669.3 H1237 M1236.6 669.3 V675" stroke="#3a3a3a" stroke-width="1" fill="none"/>
<rect x="731" y="669.3" width="501" height="5.7" fill="#000"/>
<rect x="860.3" y="669.9" width="1" height="5.2" fill="#fff" opacity="0.85"/>
<rect x="946.8" y="669.9" width="1" height="5.2" fill="#fff" opacity="0.85"/>
<rect x="1025.2" y="669.9" width="1" height="5.2" fill="#fff" opacity="0.85"/>
<rect x="1134.3" y="669.9" width="1" height="5.2" fill="#fff" opacity="0.85"/>
<text x="731.90" y="684.50" font-size="9" text-anchor="middle" fill="#111" textLength="38.50" lengthAdjust="spacingAndGlyphs">5/18 22:00</text>
<text x="782.45" y="684.50" font-size="9" text-anchor="middle" fill="#111" textLength="38.50" lengthAdjust="spacingAndGlyphs">5/21 23:00</text>
<text x="833.00" y="684.50" font-size="9" text-anchor="middle" fill="#111" textLength="38.50" lengthAdjust="spacingAndGlyphs">5/24 23:00</text>
<text x="883.55" y="684.50" font-size="9" text-anchor="middle" fill="#111" textLength="33.97" lengthAdjust="spacingAndGlyphs">5/28 0:00</text>
<text x="934.10" y="684.50" font-size="9" text-anchor="middle" fill="#111" textLength="33.97" lengthAdjust="spacingAndGlyphs">5/31 0:00</text>
<text x="984.65" y="684.50" font-size="9" text-anchor="middle" fill="#111" textLength="29.44" lengthAdjust="spacingAndGlyphs">6/3 1:00</text>
<text x="1035.20" y="684.50" font-size="9" text-anchor="middle" fill="#111" textLength="29.44" lengthAdjust="spacingAndGlyphs">6/6 2:00</text>
<text x="1085.75" y="684.50" font-size="9" text-anchor="middle" fill="#111" textLength="29.44" lengthAdjust="spacingAndGlyphs">6/9 2:00</text>
<text x="1136.30" y="684.50" font-size="9" text-anchor="middle" fill="#111" textLength="33.97" lengthAdjust="spacingAndGlyphs">6/12 3:00</text>
<text x="1186.85" y="684.50" font-size="9" text-anchor="middle" fill="#111" textLength="33.97" lengthAdjust="spacingAndGlyphs">6/15 3:00</text>
<path d="M731.5 498.6 L946.3 498.6 L948.2 542.8 L949.8 498.6 L958.2 498.6 L958.7 491.3 L1010.4 491.3 L1011.7 483.9 L1013.7 483.9 L1014.4 491.3 L1022.5 491.3 L1023.1 498.6 L1024.7 498.6 L1026.4 491.3 L1027.9 498.6 L1032.8 498.6 L1033.6 513.4 L1108.4 513.4 L1109.5 498.6 L1231.8 498.6" fill="none" stroke="#ff7f0e" stroke-width="0.85" stroke-opacity="0.92"/>
<path d="M731.5 653.2 L1027.5 653.2 L1028.7 638.5 L1060.4 638.5 L1062.0 645.8 L1072.8 645.8 L1073.8 638.5 L1075.3 645.8 L1081.4 645.8 L1082.9 638.5 L1094.3 638.5 L1095.6 645.8 L1097.6 645.8 L1099.1 638.5 L1102.3 638.5 L1103.8 645.8 L1105.2 645.8 L1106.5 638.5 L1107.5 645.8 L1109.0 638.5 L1157.5 638.5 L1158.5 645.8 L1159.8 638.5 L1221.8 638.5 L1222.8 645.8 L1226.0 645.8 L1227.5 638.5 L1231.8 638.5" fill="none" stroke="#2c80c0" stroke-width="0.85"/>
<path d="M731.5 653.2 H1231.8" stroke="#2ca02c" stroke-width="1.5" fill="none" opacity="0.8"/>
<rect x="726.6" y="467" width="163.4" height="97.6" fill="#fff" fill-opacity="0.88" stroke="#dcdcdc" stroke-width="1"/>
<rect x="732.5" y="475.9" width="8.7" height="8.8" fill="#1f77b4"/>
<text x="746.20" y="484.70" font-size="11" text-anchor="start" fill="#111" textLength="107.10" lengthAdjust="spacingAndGlyphs">Clients online from CMG</text>
<rect x="732.5" y="491.79999999999995" width="8.7" height="8.8" fill="#ff7f0e"/>
<text x="746.20" y="500.60" font-size="11" text-anchor="start" fill="#111" textLength="133.80" lengthAdjust="spacingAndGlyphs">Clients online from intranet MP</text>
<rect x="732.5" y="507.7" width="8.7" height="8.8" fill="#2ca02c"/>
<text x="746.20" y="516.50" font-size="11" text-anchor="start" fill="#111" textLength="134.00" lengthAdjust="spacingAndGlyphs">Clients online from internet MP</text>
</svg>
</body></html>
